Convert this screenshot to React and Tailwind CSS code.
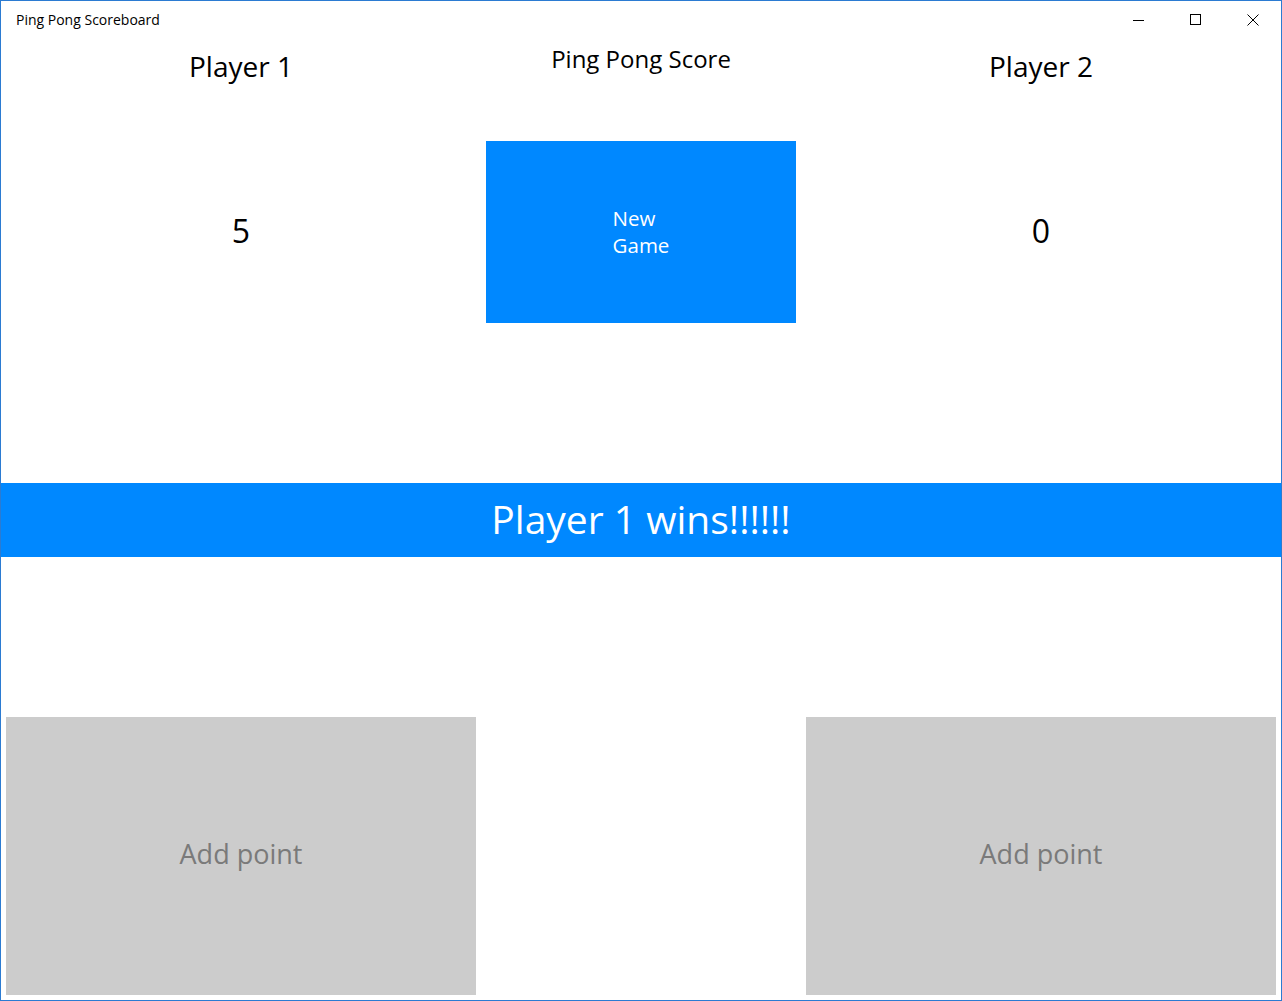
import { useState } from "react"

export default function App(){

  const [score1,setScore1] = useState(5)
  const [score2,setScore2] = useState(0)

  const winner = score1 >= 5 ? "Player 1" : score2 >= 5 ? "Player 2" : null

  function newGame(){
    setScore1(0)
    setScore2(0)
  }

  return(

    <div
      className="flex h-[1001px] w-[1282px] flex-col border border-[#2b7bd2] bg-white text-black"
      style={{ fontFamily: '"Segoe UI", "Open Sans", "Noto Sans", sans-serif' }}
    >

      {/* TITLE BAR */}

      <div className="flex h-[31px] items-center justify-between">

        <div className="pl-[15px] pt-[7px] text-[14px] leading-none text-black">
          Ping Pong Scoreboard
        </div>

        <div className="flex h-full pt-[7px]">

          <div className="flex w-[57px] items-center justify-center">
            <svg width="12" height="12" viewBox="0 0 12 12">
              <path d="M0 6.5h11" stroke="black" strokeWidth="1" />
            </svg>
          </div>

          <div className="flex w-[57px] items-center justify-center">
            <svg width="12" height="12" viewBox="0 0 12 12">
              <rect x="0.5" y="0.5" width="10" height="10" fill="none" stroke="black" strokeWidth="1" />
            </svg>
          </div>

          <div className="flex w-[57px] items-center justify-center">
            <svg width="12" height="12" viewBox="0 0 12 12">
              <path d="M0.5 0.5l11 11M11.5 0.5l-11 11" stroke="black" strokeWidth="1" />
            </svg>
          </div>

        </div>

      </div>


      {/* HEADER */}

      <div className="grid h-[109px] grid-cols-[480px_320px_480px]">

        <div className="pt-[16px] text-center text-[28px] leading-[36px]">
          Player 1
        </div>

        <div className="pt-[11px] text-center text-[24px] leading-[32px]">
          Ping Pong Score
        </div>

        <div className="pt-[16px] text-center text-[28px] leading-[36px]">
          Player 2
        </div>

      </div>


      {/* SCORES */}

      <div className="grid h-[182px] grid-cols-[480px_320px_480px]">

        <div className="flex items-center justify-center pb-[2px] text-[32px]">
          {score1}
        </div>

        <div className="px-[5px]">

          <button
            onClick={newGame}
            className="flex h-full w-full items-center justify-center bg-[#0088ff] text-white"
          >
            <span className="text-left text-[20.5px] leading-[27px]">
              New<br />Game
            </span>
          </button>

        </div>

        <div className="flex items-center justify-center pb-[2px] text-[32px]">
          {score2}
        </div>

      </div>


      <div className="h-[160px]" />


      {/* WINNER BANNER */}

      <div className="flex h-[74px] items-center justify-center bg-[#0088ff] pb-[2px] text-[39px] text-white">
        {winner ? `${winner} wins!!!!!!` : ""}
      </div>


      <div className="h-[160px]" />


      {/* ADD POINT */}

      <div className="grid h-[278px] grid-cols-[480px_320px_480px]">

        <div className="px-[5px]">
          <button
            onClick={()=>setScore1(s=>s+1)}
            className="h-full w-full bg-[#cccccc] pb-[4px] text-[27px] text-[#7a7a7a]"
          >
            Add point
          </button>
        </div>

        <div />

        <div className="px-[5px]">
          <button
            onClick={()=>setScore2(s=>s+1)}
            className="h-full w-full bg-[#cccccc] pb-[4px] text-[27px] text-[#7a7a7a]"
          >
            Add point
          </button>
        </div>

      </div>

    </div>

  )

}
